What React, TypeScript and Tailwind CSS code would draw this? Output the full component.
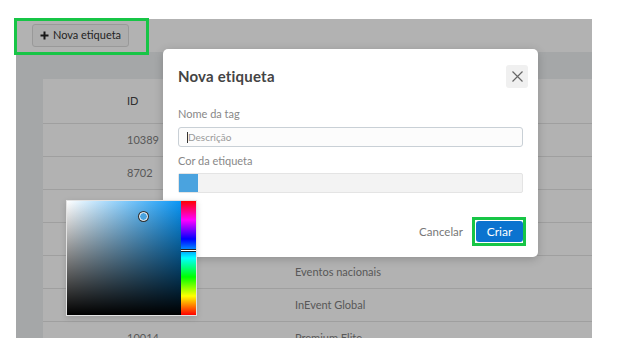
import { useState } from 'react'

const rows = [
  { id: '10389', name: 'Palestrantes' },
  { id: '8702', name: 'Expositores' },
  { id: '9941', name: 'Convidados VIP' },
  { id: '10120', name: 'Imprensa' },
  { id: '9876', name: 'Eventos nacionais' },
  { id: '10233', name: 'InEvent Global' },
  { id: '10014', name: 'Premium Elite' },
]

function PlusIcon() {
  return (
    <svg width="9" height="9" viewBox="0 0 9 9">
      <path d="M4.5 0.5v8M0.5 4.5h8" stroke="#222" strokeWidth="2" />
    </svg>
  )
}

function CloseIcon() {
  return (
    <svg width="11" height="11" viewBox="0 0 11 11">
      <path d="M0.5 0.5l10 10M10.5 0.5l-10 10" stroke="#666" strokeWidth="1.2" />
    </svg>
  )
}

function ColorPicker() {
  return (
    <div className="absolute left-[66px] top-[200px] flex border border-[#e2e2e2] bg-white shadow-[0_2px_6px_rgba(0,0,0,0.15)]">
      <div className="relative w-[114px] h-[114px] bg-[linear-gradient(to_top,#000,transparent),linear-gradient(to_right,#fff,#0a96f5)]">
        <span className="absolute left-[72px] top-[11px] w-[9px] h-[9px] rounded-full bg-[#4aa3df] border-[1.5px] border-white ring-1 ring-[#333]" />
      </div>
      <div className="relative w-[15px] h-[114px] bg-[linear-gradient(to_bottom,#f00,#f0f,#00f,#0ff,#0f0,#ff0,#f00)]">
        <span className="absolute left-0 right-0 top-[48px] h-[3px] bg-white border-y border-[#222]" />
      </div>
    </div>
  )
}

function Modal() {
  const [name, setName] = useState('')
  return (
    <div className="absolute left-[163px] top-[49px] w-[375px] h-[208px] bg-white rounded-[5px] shadow-[0_2px_10px_rgba(0,0,0,0.2)] flex flex-col pl-[15px]">
      <div className="mt-[16px] h-[23px] pr-[10px] flex items-center justify-between">
        <h2 className="text-[15px] font-bold text-[#444] tracking-[0.2px]">Nova etiqueta</h2>
        <button className="w-[22px] h-[23px] rounded-[3px] bg-[#f0f0f0] flex items-center justify-center">
          <CloseIcon />
        </button>
      </div>
      <div className="pr-[12px] flex flex-col">
        <label className="mt-[19px] text-[11px] leading-[14px] text-[#888]">Nome da tag</label>
        <div className="mt-[6px] mr-[3px] h-[20px] rounded-[3px] border border-[#c9d0d6] bg-[#fcfcfc] flex items-center pl-[8px]">
          <span className="w-px h-[11px] bg-[#333]" />
          <input
            value={name}
            onChange={(e) => setName(e.target.value)}
            placeholder="Descrição"
            className="flex-1 bg-transparent outline-none text-[10px] text-[#333] placeholder:text-[#999]"
          />
        </div>
        <label className="mt-[7px] text-[11px] leading-[14px] text-[#888]">Cor da etiqueta</label>
        <div className="mt-[5px] mr-[3px] h-[20px] rounded-[2px] border border-[#e4e4e4] bg-[#f3f3f3] flex">
          <span className="w-[19px] h-full bg-[#4aa3df]" />
        </div>
        <div className="mt-[24px] flex items-center justify-end gap-[9px]">
          <button className="text-[11.5px] text-[#777]">Cancelar</button>
          <span className="border-[3px] border-[#17c546] pl-[1px] pt-[1px] pb-px">
            <button className="block w-[47px] h-[21px] rounded-[3px] bg-[#0b73cf] text-white text-[12px]">Criar</button>
          </span>
        </div>
      </div>
    </div>
  )
}

export default function App() {
  return (
    <div className="relative w-[617px] h-[359px] bg-white overflow-hidden font-['Lato','Liberation_Sans',sans-serif]">
      <div className="relative ml-[16px] mt-[19px] w-[576px] h-[319px] overflow-hidden bg-[#edf0f1] flex flex-col">
        <div className="h-[33px] bg-white flex items-center pl-[16px] shrink-0">
          <button className="h-[23px] w-[97px] rounded-[3px] border border-[#dcdcdc] bg-[#f8f8f8] flex items-center justify-center gap-[4px] text-[11px] text-[#333]">
            <PlusIcon />
            Nova etiqueta
          </button>
        </div>
        <div className="pl-[27px] pt-[27px]">
          <div className="w-[600px] bg-white text-[11px]">
            <div className="h-[44px] grid grid-cols-[252px_1fr] items-center text-[#444]">
              <span className="pl-[84px]">ID</span>
              <span>Nome</span>
            </div>
            {rows.map((r) => (
              <div key={r.id} className="h-[33px] grid grid-cols-[252px_1fr] items-center border-t border-[#e4e4e4] text-[#808080]">
                <span className="pl-[84px]">{r.id}</span>
                <span>{r.name}</span>
              </div>
            ))}
          </div>
        </div>
        <div className="absolute inset-0 bg-black/30" />
      </div>
      <div className="absolute left-[14px] top-[18px] w-[135px] h-[37px] border-[3px] border-[#17c546]" />
      <Modal />
      <ColorPicker />
    </div>
  )
}
